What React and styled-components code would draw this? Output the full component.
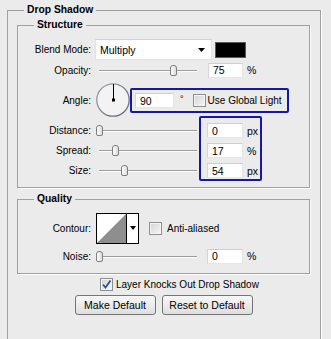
import React from 'react';
import styled, { createGlobalStyle } from 'styled-components';

const GlobalStyle = createGlobalStyle`
  html, body { margin: 0; padding: 0; }
  body {
    width: 331px;
    height: 339px;
    overflow: hidden;
    background: #ebebeb;
    font-family: "Liberation Sans", Arial, sans-serif;
    font-size: 10px;
    color: #000;
  }
`;

const slideRows = [
  { label: 'Distance:', pos: 0, value: '0', unit: 'px' },
  { label: 'Spread:', pos: 16.5, value: '17', unit: '%' },
  { label: 'Size:', pos: 25.5, value: '54', unit: 'px' },
];

const Slider = ({ pos }) => (
  <SliderWrap>
    <Track />
    <Thumb style={{ left: pos + 0.5 }} />
  </SliderWrap>
);

const Dial = () => (
  <DialSvg width="34" height="34" viewBox="0 0 34 34">
    <defs>
      <linearGradient id="rim" x1="0" y1="0" x2="1" y2="1">
        <stop offset="0" stopColor="#a4a9b0" />
        <stop offset="1" stopColor="#5c636c" />
      </linearGradient>
    </defs>
    <circle cx="17" cy="17" r="16.2" fill="#f3f3f3" stroke="url(#rim)" strokeWidth="1.3" />
    <line x1="17.5" y1="17" x2="17.5" y2="1" stroke="#000" strokeWidth="1" />
    <rect x="16" y="15.5" width="3" height="3" fill="#000" />
  </DialSvg>
);

const App = () => {
  return (
    <>
      <GlobalStyle />
      <Panel>
        <Title>Drop Shadow</Title>
        <Group>
          <Title>Structure</Title>
          <Row $h={21}>
            <Label>Blend Mode:</Label>
            <Select>
              Multiply
              <svg width="7" height="4" viewBox="0 0 7 4"><polygon points="0,0 7,0 3.5,4" fill="#000" /></svg>
            </Select>
            <Swatch />
          </Row>
          <Row $h={16} $mt={2}>
            <Label>Opacity:</Label>
            <Slider pos={74} />
            <Field readOnly value="75" $w={35} $ml={9} />
            <Unit>%</Unit>
          </Row>
          <AngleRow>
            <Label>Angle:</Label>
            <Dial />
            <AngleBox>
              <Field readOnly value="90" $w={39} />
              <Degree>°</Degree>
              <Check />
              <CheckText>Use Global Light</CheckText>
            </AngleBox>
          </AngleRow>
          <Block>
            <SliderCol>
              {slideRows.map(r => (
                <Row key={r.label} $h={15}>
                  <Label>{r.label}</Label>
                  <Slider pos={r.pos} />
                </Row>
              ))}
            </SliderCol>
            <ValueBox>
              {slideRows.map(r => (
                <Row key={r.label} $h={15}>
                  <Field readOnly value={r.value} $w={36} />
                  <Unit>{r.unit}</Unit>
                </Row>
              ))}
            </ValueBox>
          </Block>
        </Group>

        <Group $mt={5} $pb={9}>
          <Title>Quality</Title>
          <Row $h={30}>
            <Label>Contour:</Label>
            <Contour>
              <svg width="29" height="29" viewBox="0 0 29 29">
                <rect width="29" height="29" fill="#fff" />
                <polygon points="0,29 29,0 29,29" fill="#8e8e8e" />
              </svg>
              <ContourArrow>
                <svg width="6" height="4" viewBox="0 0 6 4"><polygon points="0,0 6,0 3,4" fill="#000" /></svg>
              </ContourArrow>
            </Contour>
            <Check $ml={10} />
            <CheckText $ml={5}>Anti-aliased</CheckText>
          </Row>
          <Row $h={16} $mt={5}>
            <Label>Noise:</Label>
            <Slider pos={0} />
            <Field readOnly value="0" $w={36} $ml={8} />
            <Unit>%</Unit>
          </Row>
        </Group>

        <KnockRow>
          <Check $checked>
            <svg width="11" height="11" viewBox="0 0 11 11">
              <path d="M2 5.5 L4.5 8.5 L9.5 1.5" fill="none" stroke="#2c4f9e" strokeWidth="1.8" />
            </svg>
          </Check>
          <CheckText $ml={3}>Layer Knocks Out Drop Shadow</CheckText>
        </KnockRow>

        <Buttons>
          <Button $w={81}>Make Default</Button>
          <Button $w={91}>Reset to Default</Button>
        </Buttons>
      </Panel>
    </>
  );
};

export default App;

const Panel = styled.fieldset`
  box-sizing: border-box;
  width: 314px;
  height: 335px;
  min-width: 0;
  margin: 4px 0 0 7px;
  padding: 3px 10px 0 9px;
  border: 1px solid #a0a0a0;
  border-bottom: none;
  box-shadow: 1px 0 0 #fff;
`;

const Group = styled.fieldset`
  box-sizing: border-box;
  width: 293px;
  min-width: 0;
  margin: ${p => p.$mt || 0}px 0 0 0;
  padding: 8px 8px ${p => p.$pb || 6}px 9px;
  border: 1px solid #a0a0a0;
  box-shadow: 1px 1px 0 #fff;
`;

const Title = styled.legend`
  margin-left: 7px;
  padding: 0 3px;
  font-size: 10.3px;
  font-weight: bold;
  line-height: 12px;
`;

const Row = styled.div`
  display: flex;
  align-items: center;
  height: ${p => p.$h}px;
  margin-top: ${p => p.$mt || 0}px;
  white-space: nowrap;
`;

const Label = styled.span`
  flex: none;
  width: 64px;
  margin-right: 4px;
  text-align: right;
`;

const Select = styled.div`
  box-sizing: border-box;
  display: flex;
  align-items: center;
  justify-content: space-between;
  width: 117px;
  height: 21px;
  padding: 0 6px 0 4px;
  background: #fff;
  border: 1px solid #e2e2e2;
  border-top-color: #d0d0d0;
  font-size: 10.5px;
`;

const Swatch = styled.div`
  box-sizing: border-box;
  width: 31px;
  height: 16px;
  margin-left: 3px;
  background: #000;
  border: 1px solid #5a5a5a;
`;

const SliderWrap = styled.div`
  position: relative;
  flex: none;
  width: 104px;
  height: 15px;
`;

const Track = styled.div`
  position: absolute;
  left: 4px;
  width: 98px;
  top: 7px;
  height: 1px;
  background: #9e9e9e;
  border-bottom: 1px solid #fbfbfb;
`;

const Thumb = styled.div`
  position: absolute;
  top: 2px;
  box-sizing: border-box;
  width: 7px;
  height: 11px;
  border: 1px solid #7d7d7d;
  border-radius: 3px 3px 2px 2px;
  background: linear-gradient(90deg, #fdfdfd, #dcdcdc);
`;

const Field = styled.input`
  box-sizing: border-box;
  flex: none;
  width: ${p => p.$w}px;
  height: 15px;
  margin: 0 0 0 ${p => p.$ml || 0}px;
  padding: 0 0 0 4px;
  background: #fff;
  border: 1px solid #e6e6e6;
  border-top-color: #cfcfcf;
  border-left-color: #d6d6d6;
  font-family: inherit;
  font-size: 10.5px;
  color: #000;
  outline: none;
`;

const Unit = styled.span`
  margin-left: 4px;
  font-size: 10.5px;
`;

const AngleRow = styled.div`
  display: flex;
  align-items: flex-start;
  height: 33px;
  margin-top: 5px;
  white-space: nowrap;
  & > span:first-child {
    align-self: center;
    margin-top: 1px;
  }
`;

const DialSvg = styled.svg`
  flex: none;
  margin-left: 1px;
`;

const Highlight = styled.div`
  box-sizing: border-box;
  border: 2px solid #1616a8;
  border-radius: 2px;
`;

const AngleBox = styled(Highlight)`
  display: flex;
  align-items: center;
  width: 159px;
  height: 25px;
  margin-top: 5px;
  padding: 0 3px;
`;

const Degree = styled.span`
  margin-left: 6px;
  margin-top: -3px;
  font-size: 9px;
`;

const Check = styled.span`
  box-sizing: border-box;
  display: flex;
  align-items: center;
  justify-content: center;
  flex: none;
  width: 13px;
  height: 13px;
  margin-left: ${p => p.$ml ?? 9}px;
  border: 1px solid #8f8f8f;
  background: linear-gradient(135deg, #d2d2d2, #f8f8f8);
  box-shadow: inset 0 0 0 1px #f4f4f4;
`;

const CheckText = styled.span`
  margin-left: ${p => p.$ml ?? 2}px;
  font-size: 10px;
`;

const Block = styled.div`
  display: flex;
  align-items: flex-start;
`;

const SliderCol = styled.div`
  display: flex;
  flex-direction: column;
  gap: 5px;
  padding-top: 7px;
`;

const ValueBox = styled(Highlight)`
  display: flex;
  flex-direction: column;
  gap: 5px;
  width: 63px;
  padding: 5px 2px 1px 6px;
`;

const Contour = styled.div`
  display: flex;
  flex: none;
  margin-left: 1px;
  border: 1px solid #000;
  background: #fff;
`;

const ContourArrow = styled.div`
  display: flex;
  align-items: center;
  justify-content: center;
  width: 11px;
  border-left: 1px solid #000;
`;

const KnockRow = styled.div`
  display: flex;
  align-items: center;
  height: 13px;
  margin: 4px 0 0 83px;
  white-space: nowrap;
  & > span:first-child { margin-left: 0; }
`;

const Buttons = styled.div`
  display: flex;
  justify-content: center;
  gap: 6px;
  width: 293px;
  margin-top: 4px;
`;

const Button = styled.button`
  box-sizing: border-box;
  width: ${p => p.$w}px;
  height: 20px;
  padding: 0;
  border: 1px solid #747474;
  border-radius: 3px;
  background: linear-gradient(#f7f7f7, #ececec 50%, #dedede);
  font-family: inherit;
  font-size: 10.5px;
  color: #000;
`;
